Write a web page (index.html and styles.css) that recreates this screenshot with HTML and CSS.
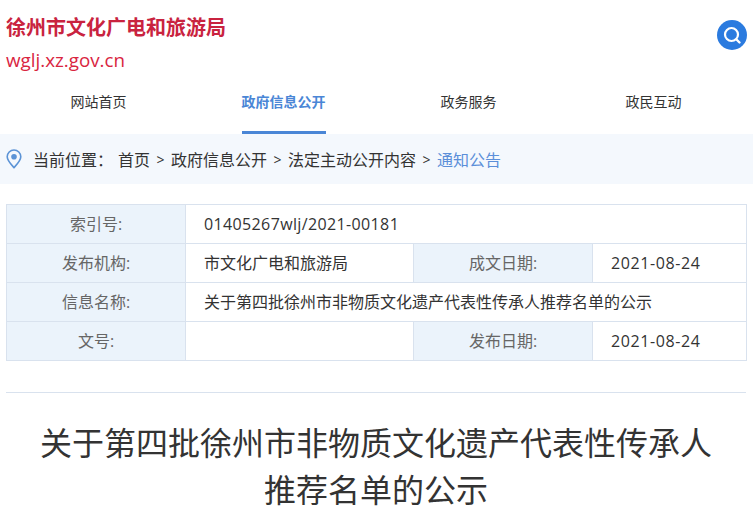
FILE: index.html
```html
<!DOCTYPE html>
<html lang="zh-CN">
<head>
    <meta charset="UTF-8">
    <meta name="viewport" content="width=device-width, initial-scale=1.0">
    <title>关于第四批徐州市非物质文化遗产代表性传承人推荐名单的公示</title>
    <link rel="stylesheet" href="styles.css">
</head>
<body>
    <header class="top">
        <div class="brand">
            <div class="brand-name">徐州市文化广电和旅游局</div>
            <div class="brand-url">wglj.xz.gov.cn</div>
        </div>
        <a href="#" class="search-btn" aria-label="搜索">
            <svg width="20" height="20" viewBox="0 0 20 20" fill="none" stroke="#fff">
                <circle cx="9.5" cy="9.5" r="6.5" stroke-width="2.2"/>
                <path d="M14.5 14.5l3 3" stroke-width="2.4" stroke-linecap="round"/>
            </svg>
        </a>
    </header>

    <nav class="nav">
        <div class="nav-item"><a href="#">网站首页</a></div>
        <div class="nav-item"><a href="#" class="active">政府信息公开</a></div>
        <div class="nav-item"><a href="#">政务服务</a></div>
        <div class="nav-item"><a href="#">政民互动</a></div>
    </nav>

    <div class="crumbs">
        <svg class="pin" width="16" height="20" viewBox="0 0 16 20" fill="none">
            <path d="M8 18.6C4.6 15 1.2 11.6 1.2 7.8a6.8 6.8 0 0 1 13.6 0C14.8 11.6 11.4 15 8 18.6z" stroke="#5b93d6" stroke-width="1.6"/>
            <circle cx="8" cy="7.8" r="2.8" fill="#5b93d6"/>
        </svg>
        <span class="crumbs-label">当前位置：</span>
        <a href="#">首页</a><span class="sep">&gt;</span>
        <a href="#">政府信息公开</a><span class="sep">&gt;</span>
        <a href="#">法定主动公开内容</a><span class="sep">&gt;</span>
        <a href="#" class="current">通知公告</a>
    </div>

    <div class="container">
        <table class="info">
            <colgroup>
                <col class="col-label">
                <col class="col-value">
                <col class="col-label">
                <col class="col-date">
            </colgroup>
            <tr>
                <th>索引号:</th>
                <td colspan="3" class="code">01405267wlj/2021-00181</td>
            </tr>
            <tr>
                <th>发布机构:</th>
                <td>市文化广电和旅游局</td>
                <th>成文日期:</th>
                <td class="num">2021-08-24</td>
            </tr>
            <tr>
                <th>信息名称:</th>
                <td colspan="3">关于第四批徐州市非物质文化遗产代表性传承人推荐名单的公示</td>
            </tr>
            <tr>
                <th>文号:</th>
                <td></td>
                <th>发布日期:</th>
                <td class="num">2021-08-24</td>
            </tr>
        </table>

        <h1 class="title">关于第四批徐州市非物质文化遗产代表性传承人推荐名单的公示</h1>
    </div>
</body>
</html>
```

FILE: styles.css
```css
body {
    margin: 0;
    font-family: "Open Sans", "Noto Sans CJK SC", sans-serif;
    color: #333;
    background: #fff;
}
a {
    color: inherit;
    text-decoration: none;
}
.top {
    display: flex;
    justify-content: space-between;
    align-items: flex-start;
    height: 76px;
    padding: 0 6px;
}
.brand-name {
    margin-top: 13px;
    font-size: 20px;
    line-height: 30px;
    font-weight: bold;
    color: #c9233f;
}
.brand-url {
    margin-top: 2px;
    font-size: 18.8px;
    line-height: 30px;
    color: #d9253f;
}
.search-btn {
    display: flex;
    align-items: center;
    justify-content: center;
    width: 30px;
    height: 30px;
    margin-top: 20px;
    border-radius: 50%;
    background: #2b7bdf;
}
.nav {
    display: grid;
    grid-template-columns: repeat(4, 1fr);
    height: 58px;
    padding: 0 7px 0 6px;
    font-size: 14px;
    text-align: center;
}
.nav-item a {
    display: inline-block;
    height: 55px;
    line-height: 52px;
}
.nav-item a.active {
    border-bottom: 3px solid #4a86d6;
    color: #4a86d6;
    font-weight: bold;
}
.crumbs {
    display: flex;
    align-items: center;
    height: 50px;
    padding-left: 6px;
    background: #f4f8fd;
    font-size: 16px;
}
.pin {
    margin-right: 11px;
}
.crumbs-label {
    margin-right: 5px;
}
.sep {
    width: 21px;
    text-align: center;
    font-size: 14px;
}
.current {
    color: #5b8fd9;
}
.container {
    margin: 20px 7px 0 6px;
}
.info {
    width: 740px;
    table-layout: fixed;
    border-collapse: collapse;
    font-size: 16px;
}
.col-label {
    width: 179px;
}
.col-value {
    width: 228px;
}
.col-date {
    width: 154px;
}
.info th, .info td {
    height: 39px;
    padding: 0 0 2px;
    box-sizing: border-box;
    border: 1px solid #d9e2ee;
}
.info th {
    background: #ebf3fb;
    color: #666;
    font-weight: normal;
    text-align: center;
}
.info td {
    padding-left: 18px;
    color: #333;
}
.info td.num {
    padding-bottom: 0;
    letter-spacing: 0.6px;
}
.info td.code {
    padding-bottom: 0;
    letter-spacing: 0.37px;
}
.title {
    margin: 31px 0 0;
    padding: 26px 30px 0;
    border-top: 1px solid #d9e2ee;
    font-size: 32px;
    line-height: 47px;
    font-weight: normal;
    color: #333;
    text-align: center;
}
```
